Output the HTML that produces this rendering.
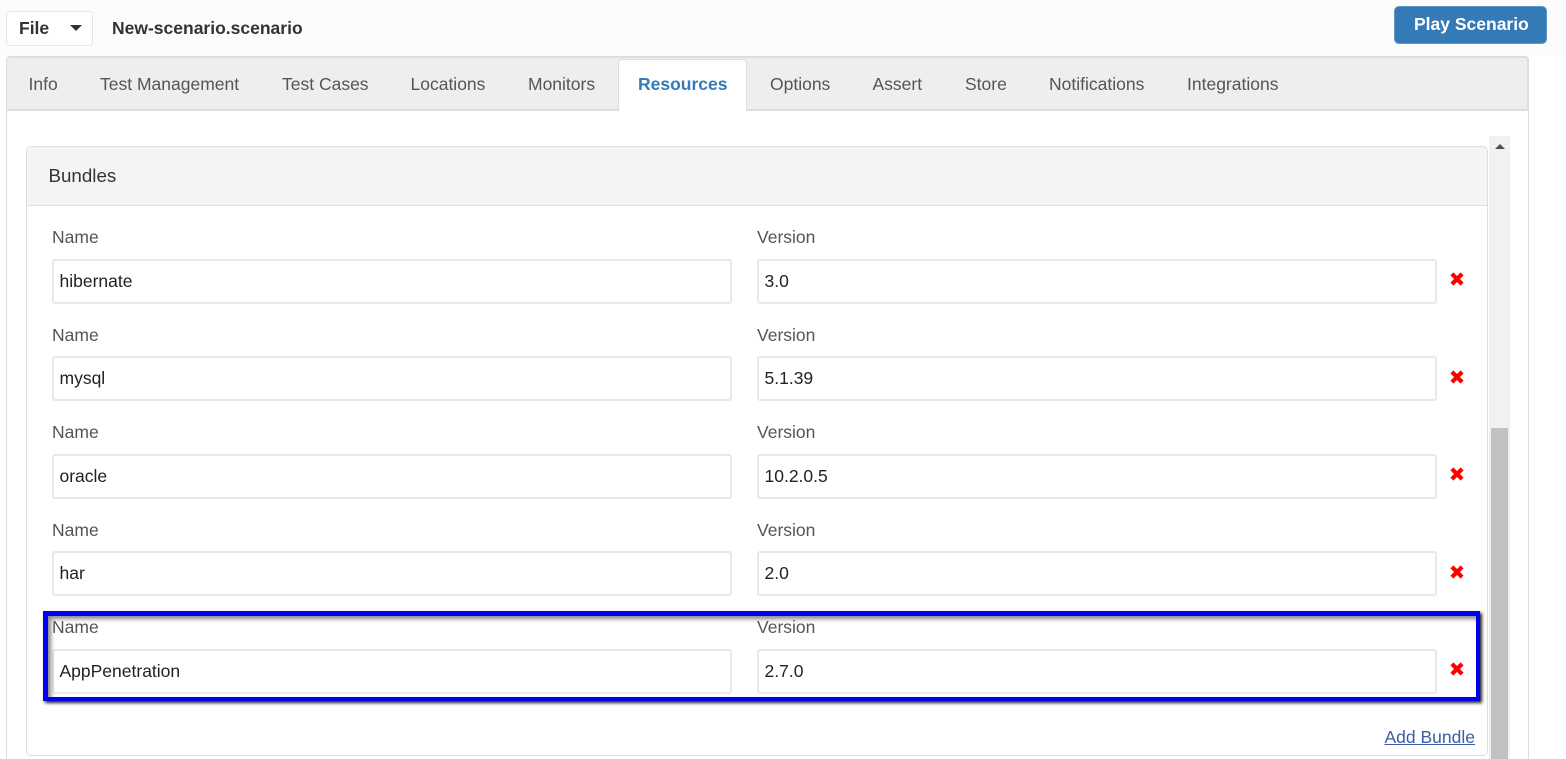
<!DOCTYPE html>
<html><head><meta charset="utf-8">
<style>
html,body{margin:0;padding:0;width:1566px;height:759px;overflow:hidden;background:#fff;font-family:"Liberation Sans",Arial,sans-serif;font-size:17.5px;color:#555}
.a{position:absolute;box-sizing:border-box}
.t{position:absolute;white-space:nowrap;line-height:24px;height:24px}
.tab{top:72px;color:#555}
.lbl{color:#555}
.inp{position:absolute;box-sizing:border-box;height:45px;background:#fff;border:2px solid #e8e8e8;border-radius:3px;color:#222;line-height:41px;padding-left:5.5px}
.x{position:absolute;width:14px;height:14px}
</style></head><body>
<div class="a" style="left:0;top:0;width:1566px;height:56px;background:#fcfcfc"></div>
<div class="a" style="left:6px;top:11px;width:87px;height:35px;background:#fff;border:1px solid #e6e6e6;border-radius:3px"></div>
<div class="t" style="left:19px;top:16px;font-weight:bold;color:#333">File</div>
<div class="a" style="left:70px;top:25px;width:0;height:0;border-left:6px solid transparent;border-right:6px solid transparent;border-top:6px solid #333"></div>
<div class="t" style="left:112px;top:16px;font-weight:bold;color:#333">New-scenario.scenario</div>
<div class="a" style="left:1394px;top:6px;width:153px;height:38px;background:#337ab7;border:1px solid #5f97c8;border-radius:5px"></div>
<div class="t" style="left:1414px;top:12px;font-weight:bold;color:#fff">Play Scenario</div>

<div class="a" style="left:6px;top:56px;width:1523px;height:703px;background:#fff;border:1px solid #ddd;border-bottom:0;border-top-width:2px;border-radius:4px 4px 0 0"></div>
<div class="a" style="left:7px;top:58px;width:1522px;height:53px;background:#eee;border-bottom:2px solid #ddd;border-right:2px solid #ddd"></div>
<div class="a" style="left:618px;top:59px;width:129px;height:52px;background:#fff;border:1px solid #ddd;border-bottom:0;border-radius:4px 4px 0 0"></div>

<div class="t tab" style="left:28.500px">Info</div>
<div class="t tab" style="left:100px">Test Management</div>
<div class="t tab" style="left:282px">Test Cases</div>
<div class="t tab" style="left:410.500px">Locations</div>
<div class="t tab" style="left:528px">Monitors</div>
<div class="t tab" style="left:638px;font-weight:bold;color:#337ab7">Resources</div>
<div class="t tab" style="left:770px">Options</div>
<div class="t tab" style="left:872.500px">Assert</div>
<div class="t tab" style="left:965px">Store</div>
<div class="t tab" style="left:1049px">Notifications</div>
<div class="t tab" style="left:1187px">Integrations</div>

<div class="a" style="left:26px;top:146px;width:1462px;height:610px;background:#fff;border:1px solid #ddd;border-radius:5px"></div>
<div class="a" style="left:27px;top:147px;width:1460px;height:59px;background:#f4f4f4;border-bottom:1px solid #ddd;border-radius:5px 5px 0 0"></div>
<div class="t" style="left:48.500px;top:164px;color:#333;font-size:18.750px">Bundles</div>

<div class="a" style="left:1489px;top:136px;width:21px;height:623px;background:#f1f1f1"></div>
<div class="a" style="left:1491px;top:428px;width:17px;height:331px;background:#c1c1c1"></div>
<div class="a" style="left:1495px;top:144px;width:0;height:0;border-left:5px solid transparent;border-right:5px solid transparent;border-bottom:5px solid #505050"></div>

<div class="t lbl" style="left:52px;top:225px">Name</div>
<div class="t lbl" style="left:757px;top:225px">Version</div>
<div class="inp" style="left:52px;top:259px;width:680px">hibernate</div>
<div class="inp" style="left:757px;top:259px;width:680px">3.0</div>
<svg class="x" style="left:1450.300px;top:272px" viewBox="0 0 14 14"><path d="M1.900 1.900L12.100 12.100M12.100 1.900L1.900 12.100" stroke="#f00" stroke-width="4.200"/></svg>

<div class="t lbl" style="left:52px;top:323px">Name</div>
<div class="t lbl" style="left:757px;top:323px">Version</div>
<div class="inp" style="left:52px;top:356px;width:680px">mysql</div>
<div class="inp" style="left:757px;top:356px;width:680px">5.1.39</div>
<svg class="x" style="left:1450.300px;top:370px" viewBox="0 0 14 14"><path d="M1.900 1.900L12.100 12.100M12.100 1.900L1.900 12.100" stroke="#f00" stroke-width="4.200"/></svg>

<div class="t lbl" style="left:52px;top:420px">Name</div>
<div class="t lbl" style="left:757px;top:420px">Version</div>
<div class="inp" style="left:52px;top:454px;width:680px">oracle</div>
<div class="inp" style="left:757px;top:454px;width:680px">10.2.0.5</div>
<svg class="x" style="left:1450.300px;top:467px" viewBox="0 0 14 14"><path d="M1.900 1.900L12.100 12.100M12.100 1.900L1.900 12.100" stroke="#f00" stroke-width="4.200"/></svg>

<div class="t lbl" style="left:52px;top:518px">Name</div>
<div class="t lbl" style="left:757px;top:518px">Version</div>
<div class="inp" style="left:52px;top:551px;width:680px">har</div>
<div class="inp" style="left:757px;top:551px;width:680px">2.0</div>
<svg class="x" style="left:1450.300px;top:565px" viewBox="0 0 14 14"><path d="M1.900 1.900L12.100 12.100M12.100 1.900L1.900 12.100" stroke="#f00" stroke-width="4.200"/></svg>

<div class="t lbl" style="left:52px;top:615px">Name</div>
<div class="t lbl" style="left:757px;top:615px">Version</div>
<div class="inp" style="left:52px;top:649px;width:680px">AppPenetration</div>
<div class="inp" style="left:757px;top:649px;width:680px">2.7.0</div>
<svg class="x" style="left:1450.300px;top:662px" viewBox="0 0 14 14"><path d="M1.900 1.900L12.100 12.100M12.100 1.900L1.900 12.100" stroke="#f00" stroke-width="4.200"/></svg>

<div class="a" style="left:43px;top:611px;width:1437px;height:90px;border:solid #0000f5;border-width:5px 4px 4px 5px;box-shadow:2px 2px 3px #222,inset 3px 3px 4px #888"></div>

<div class="t" style="left:1384.500px;top:725px;color:#3a5ea8;text-decoration:underline">Add Bundle</div>
</body></html>
